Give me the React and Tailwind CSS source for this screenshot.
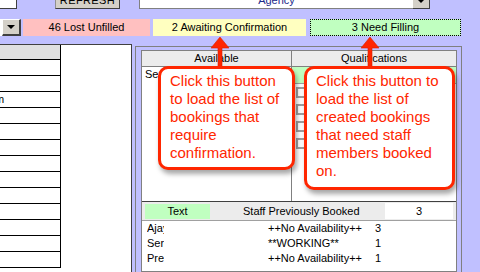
const LEFT_ROWS = Array.from({ length: 13 });

const BOOKED = [
  { name: "Ajay", status: "++No Availability++", count: 3 },
  { name: "Serena", status: "**WORKING**", count: 1 },
  { name: "Precious", status: "++No Availability++", count: 1 },
];

function Arrow({ className }) {
  return (
    <svg className={`absolute ${className}`} width="20" height="33" viewBox="0 0 20 33">
      <polygon
        points="10,1 1,12 8,12 8,33 12,33 12,12 19,12"
        fill="#ff2600"
        stroke="#d81e00"
        strokeWidth="0.6"
      />
    </svg>
  );
}

export default function App() {
  return (
    <div className="relative w-[480px] h-[272px] overflow-hidden bg-[#c0c0ff] text-[11px] text-black font-['Liberation_Sans',Arial,sans-serif]">
      {/* top row, scrolled mostly out of view */}
      <div className="flex h-[9px] items-end overflow-hidden">
        <div className="w-[17px] h-[9px] bg-white border-r border-b border-[#404040]" />
        <div className="ml-[38px] w-[65px] h-[17px] flex items-center justify-center bg-[#d4d0c8] border border-[#909090] border-r-[#404040] border-b-[#404040] tracking-[0.4px]">
          REFRESH
        </div>
        <div className="ml-[19px] w-[274px] h-[9px] bg-white border-l border-b border-[#808080] flex items-end justify-center overflow-hidden">
          <span className="leading-[11px] mb-[2px] text-[#1a2a8a]">Agency</span>
        </div>
        <div className="w-[17px] h-[9px] bg-[#d4d0c8] border-r border-b border-[#404040] flex justify-center">
          <div className="w-0 h-0 border-l-[3px] border-r-[3px] border-t-[3px] border-l-transparent border-r-transparent border-t-black" />
        </div>
      </div>

      {/* counters */}
      <div className="flex h-[17px] mt-[10px]">
        <div className="w-[21px] h-full bg-white pl-[2px]">
          <div className="h-full bg-[#d4d0c8] border-t border-l border-white border-r-2 border-b-2 border-r-[#404040] border-b-[#404040] flex items-center justify-center">
            <div className="w-0 h-0 border-l-[4px] border-r-[4px] border-t-[4px] border-l-transparent border-r-transparent border-t-black" />
          </div>
        </div>
        <div className="ml-[2px] w-[127px] bg-[#ffc0c0] flex items-center justify-center">46 Lost Unfilled</div>
        <div className="ml-[3px] w-[153px] bg-[#ffffc0] flex items-center justify-center">2 Awaiting Confirmation</div>
        <div className="ml-[4px] w-[151px] bg-[#c0ffc0] border border-dotted border-black flex items-center justify-center">
          3 Need Filling
        </div>
      </div>

      {/* main area */}
      <div className="flex mt-[8px] h-[229px]">
        {/* left list */}
        <div className="w-[132px] bg-white border-t border-r border-[#404040] flex items-start">
          <div className="w-[61px] border-r border-black">
            <div className="h-[15px] bg-[#e0e0e0] border-b border-black" />
            {LEFT_ROWS.map((_, i) => (
              <div key={i} className="h-[16px] border-b border-black overflow-hidden leading-[15px]">
                {i === 2 && <span className="block -ml-[5px]">m</span>}
              </div>
            ))}
          </div>
        </div>

        {/* right frame */}
        <div className="ml-[3px] mt-[2px] w-[327px] border border-[#808080] pl-[5px] pt-[3px] pr-[4px]">
          <div className="h-full bg-white border border-[#808080] flex flex-col">
            <div className="h-[16px] flex bg-[#ececec] border-b border-[#808080]">
              <div className="w-[150px] border-r border-[#808080] flex items-center justify-center">Available</div>
              <div className="flex-1 flex items-center justify-center">Qualifications</div>
            </div>

            <div className="h-[135px] flex border-b border-[#404040]">
              <div className="w-[150px] border-r border-[#808080] pl-[3px] pt-[1px] leading-[12px]">
                <span className="block w-[13px] overflow-hidden whitespace-nowrap">Selected</span>
              </div>
              <div className="flex-1 flex flex-col">
                <div className="h-[17px] bg-[#c0ffc0] border-b border-[#a0a0a0]" />
                <div className="mt-[3px] ml-[4px] mr-[1px] flex flex-col gap-[6px]">
                  {[0, 1, 2, 3].map((i) => (
                    <div key={i} className="h-[11px] border-2 border-[#a0a0a0]" />
                  ))}
                </div>
              </div>
            </div>

            <div className="h-[19px] flex items-center bg-[#ececec] border-b border-[#a0a0a0]">
              <div className="ml-[3px] w-[65px] h-[15px] bg-[#c0ffc0] flex items-center justify-center">Text</div>
              <div className="ml-[33px]">Staff Previously Booked</div>
              <div className="ml-auto mr-[3px] w-[68px] h-[16px] bg-white flex items-center justify-center">3</div>
            </div>

            <div className="flex flex-col">
              {BOOKED.map((b) => (
                <div key={b.name} className="flex leading-[15px] whitespace-nowrap">
                  <span className="ml-[5px] w-[17px] overflow-hidden">{b.name}</span>
                  <span className="ml-[104px] w-[107px]">{b.status}</span>
                  <span>{b.count}</span>
                </div>
              ))}
            </div>
          </div>
        </div>
      </div>

      {/* callouts */}
      <Arrow className="left-[210px] top-[36px]" />
      <Arrow className="left-[360px] top-[36px]" />

      <div className="absolute left-[158px] top-[66px] w-[137px] h-[104px] bg-white border-[3px] border-[#ff2600] rounded-[10px] shadow-[2px_4px_5px_rgba(0,0,0,0.35)] pl-[9px] pt-[3px] text-[15px] leading-[18px] text-[#ff2600] whitespace-nowrap">
        Click this button
        <br />
        to load the list of
        <br />
        bookings that
        <br />
        require
        <br />
        confirmation.
      </div>

      <div className="absolute left-[304px] top-[66px] w-[151px] h-[124px] bg-white border-[3px] border-[#ff2600] rounded-[10px] shadow-[2px_4px_5px_rgba(0,0,0,0.35)] pl-[9px] pt-[3px] text-[15px] leading-[18px] text-[#ff2600] whitespace-nowrap">
        Click this button to
        <br />
        load the list of
        <br />
        created bookings
        <br />
        that need staff
        <br />
        members booked
        <br />
        on.
      </div>
    </div>
  );
}
